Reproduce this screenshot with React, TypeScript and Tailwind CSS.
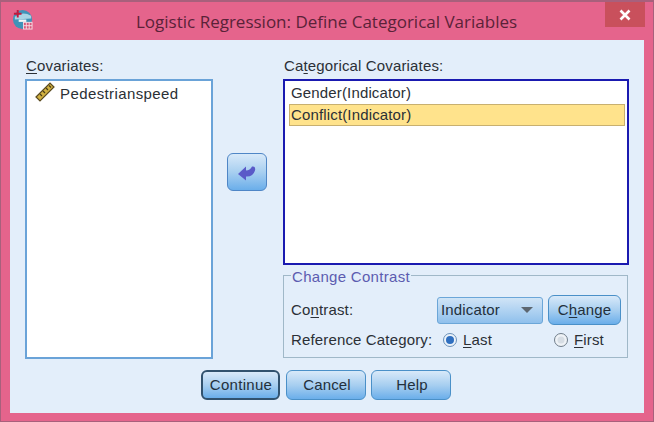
import React from "react";

function Btn({ children, className = "" }: { children: React.ReactNode; className?: string }) {
  return (
    <div className={"flex items-center justify-center rounded-[6px] border border-[#4a90c8] bg-gradient-to-b from-[#d8e9f9] via-[#a8cff0] to-[#6aaeea] pt-[1px] text-[#23303c] " + className}>
      {children}
    </div>
  );
}

function Ruler() {
  return (
    <svg width="20" height="20" viewBox="0 0 20 20" className="shrink-0">
      <path d="M1 15 L15 1 L19 5 L5 19 Z" fill="#d0b040" stroke="#5a4a20" strokeWidth="1.2" />
      <path d="M5 12 l2 2 M8 9 l2 2 M11 6 l2 2 M14 3.5 l2 2" stroke="#4a3d18" strokeWidth="1.2" />
    </svg>
  );
}

function AppIcon() {
  return (
    <svg width="21" height="21" viewBox="0 0 22 22">
      <circle cx="11" cy="11" r="10" fill="#3f93b8" />
      <path d="M3 8 Q11 2 20 7 L20 10 L3 11 Z" fill="#a9d4e4" />
      <path d="M6 1 v8 M2 5 h8" stroke="#c2183c" strokeWidth="2" />
      <rect x="7" y="11" width="8" height="2.5" fill="#f2f6f8" />
      <rect x="12" y="14" width="9" height="7" fill="#d7587a" stroke="#f6dbe3" strokeWidth="1" />
      <path d="M15 14 v7 M18 14 v7 M12 17.5 h9" stroke="#f6dbe3" strokeWidth="1" />
    </svg>
  );
}

export default function App() {
  return (
    <div className="flex h-[422px] w-[654px] flex-col overflow-hidden border border-t-2 border-[#a8607c] bg-[#e5648c] font-['Liberation_Sans',sans-serif] text-[15px] tracking-[0.15px] text-[#2b3036]">
      <div className="flex h-[38px] shrink-0 items-start">
        <div className="ml-[11px] mt-[7px] w-[22px]"><AppIcon /></div>
        <div className="mt-[8px] flex-1 pl-[102px] font-['Open_Sans',sans-serif] text-[17px] leading-[24px] tracking-normal text-[#5a2238]">
          Logistic Regression: Define Categorical Variables
        </div>
        <div className="mr-[8px] flex h-[25px] w-[40px] items-center justify-center bg-[#c9505c]">
          <svg width="14" height="12" viewBox="0 0 14 12"><path d="M2.5 1.5 L11.5 10.5 M11.5 1.5 L2.5 10.5" stroke="#fff" strokeWidth="2.6" /></svg>
        </div>
      </div>
      <div className="ml-[9px] mr-[9px] flex h-[373px] flex-col bg-[#e3eefa] pl-[15px] pr-[15px] pt-[17px]">
        <div className="flex h-[302px]">
          <div className="flex w-[188px] shrink-0 flex-col">
            <div className="h-[22px] pl-[1px] leading-[17px]"><span className="underline underline-offset-2">C</span>ovariates:</div>
            <div className="flex h-[280px] items-start gap-[5px] border-2 border-[#6aa3d8] bg-white pl-[8px] pt-[1px]">
              <Ruler />
              <span className="mt-[1px] tracking-[0.4px]">Pedestrianspeed</span>
            </div>
          </div>
          <div className="flex w-[70px] shrink-0 justify-start pl-[14px] pt-[96px]">
            <Btn className="h-[38px] w-[40px] border-[#4f86c6]">
              <svg width="20" height="18" viewBox="0 0 20 18"><path d="M1 10 L9 2.5 V6.5 Q13 6.5 15 2.5 Q19 2 18 6.5 Q16 13 9 12.5 V16.5 Z" fill="#5a5ac8" /></svg>
            </Btn>
          </div>
          <div className="flex w-[346px] shrink-0 flex-col">
            <div className="h-[22px] pl-[1px] leading-[17px]">Ca<span className="underline underline-offset-2">t</span>egorical Covariates:</div>
            <div className="h-[186px] border-2 border-[#1a1ab0] bg-white pl-[4px] pr-[2px] pt-[3px] leading-[18px]">
              <div className="h-[19px] pl-[2px]">Gender(Indicator)</div>
              <div className="mt-[1px] h-[22px] border border-[#c8b070] bg-[#ffe38c] pl-[1px] leading-[20px]">Conflict(Indicator)</div>
            </div>
            <div className="relative mr-[1px] mt-[10px] flex h-[83px] flex-col border border-[#a0b8c8] pl-[7px] pr-[5px] pt-[18px]">
              <div className="absolute -top-[8px] left-[7px] bg-[#e3eefa] px-[1px] leading-[17px] tracking-[0.3px] text-[#5c5cb0]">Change Contrast</div>
              <div className="flex h-[32px] items-center">
                <div className="w-[146px]">Co<span className="underline underline-offset-2">n</span>trast:</div>
                <div className="flex h-[27px] w-[106px] items-center justify-between rounded-[3px] border border-[#6ba6d8] bg-gradient-to-b from-[#d0e4f6] to-[#8fc0ec] pl-[3px] pr-[9px] text-[#23303c]">
                  Indicator
                  <svg width="12" height="6" viewBox="0 0 12 6"><path d="M0 0 H12 L6 6 Z" fill="#5c6670" /></svg>
                </div>
                <Btn className="ml-[5px] h-[30px] w-[73px]">C<span className="underline underline-offset-2">h</span>ange</Btn>
              </div>
              <div className="mt-[2px] flex h-[24px] items-center">
                <div className="w-[151px] whitespace-nowrap">Reference Category:</div>
                <svg width="16" height="16" viewBox="0 0 16 16"><circle cx="8" cy="8" r="6.5" fill="#eaf2fa" stroke="#6a90b8" /><circle cx="8" cy="8" r="4" fill="#2f6fc0" /></svg>
                <div className="ml-[5px] w-[90px]"><span className="underline underline-offset-2">L</span>ast</div>
                <svg width="16" height="16" viewBox="0 0 16 16"><circle cx="8" cy="8" r="6.5" fill="#eef2f6" stroke="#6f7d8a" /><circle cx="8" cy="8" r="3.5" fill="#d6dde4" /></svg>
                <div className="ml-[5px]"><span className="underline underline-offset-2">F</span>irst</div>
              </div>
            </div>
          </div>
        </div>
        <div className="mt-[11px] flex justify-start pl-[176px]">
          <Btn className="h-[30px] w-[79px] border-2 border-[#31526e] pl-[1px] tracking-[0.3px]">Continue</Btn>
          <Btn className="ml-[6px] h-[30px] w-[80px] pl-[2px]">Cancel</Btn>
          <Btn className="ml-[5px] h-[30px] w-[80px] pl-[2px]">Help</Btn>
        </div>
      </div>
    </div>
  );
}
